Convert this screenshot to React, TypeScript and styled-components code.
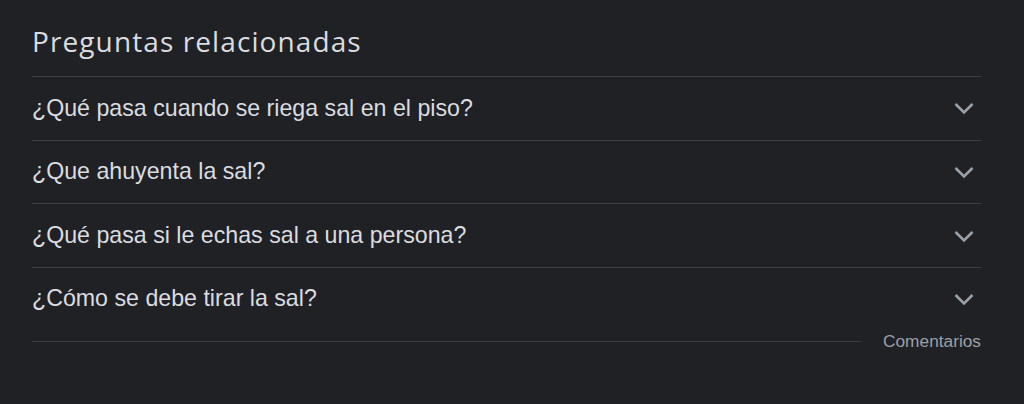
import styled, { createGlobalStyle } from 'styled-components';

const GlobalStyle = createGlobalStyle`
  html, body {
    margin: 0;
    padding: 0;
    background: #202124;
  }
  body {
    font-family: "Liberation Sans", Arial, sans-serif;
  }
`;

const Page = styled.div`
  width: 1024px;
  height: 404px;
  box-sizing: border-box;
  padding: 22px 43px 0 32px;
  background: #202124;
`;

const Title = styled.h2`
  margin: 0;
  height: 55px;
  box-sizing: border-box;
  padding-top: 1px;
  font-family: "Open Sans", "Liberation Sans", sans-serif;
  font-weight: 400;
  font-size: 28px;
  line-height: 37px;
  letter-spacing: 1.1px;
  color: #dadce0;
  border-bottom: 1px solid #3c4043;
`;

const Row = styled.div<{ $last?: boolean }>`
  display: flex;
  align-items: center;
  justify-content: space-between;
  height: ${({ $last }) => ($last ? '62px' : '63.67px')};
  box-sizing: border-box;
  border-bottom: ${({ $last }) => ($last ? 'none' : '1px solid #3c4043')};
  cursor: pointer;
`;

const Question = styled.span`
  font-size: 23.2px;
  color: #dadce0;
`;

const Chevron = styled.svg`
  width: 24px;
  height: 24px;
  margin-right: 5px;
  flex-shrink: 0;
`;

const Footer = styled.div`
  display: flex;
  align-items: center;
  gap: 22px;
  height: 23px;
`;

const Rule = styled.div`
  flex: 1;
  height: 1px;
  background: #3c4043;
`;

const Feedback = styled.span`
  font-size: 17.3px;
  line-height: 23px;
  color: #9aa0a6;
`;

function ChevronDown() {
  return (
    <Chevron viewBox="0 0 24 24">
      <path d="M3.5 8 12 16.5 20.5 8" fill="none" stroke="#9aa0a6" strokeWidth={2.6} />
    </Chevron>
  );
}

const questions = [
  '¿Qué pasa cuando se riega sal en el piso?',
  '¿Que ahuyenta la sal?',
  '¿Qué pasa si le echas sal a una persona?',
  '¿Cómo se debe tirar la sal?',
];

export default function App() {
  return (
    <Page>
      <GlobalStyle />
      <Title>Preguntas relacionadas</Title>
      {questions.map((q, i) => (
        <Row key={q} $last={i === questions.length - 1}>
          <Question>{q}</Question>
          <ChevronDown />
        </Row>
      ))}
      <Footer>
        <Rule />
        <Feedback>Comentarios</Feedback>
      </Footer>
    </Page>
  );
}
